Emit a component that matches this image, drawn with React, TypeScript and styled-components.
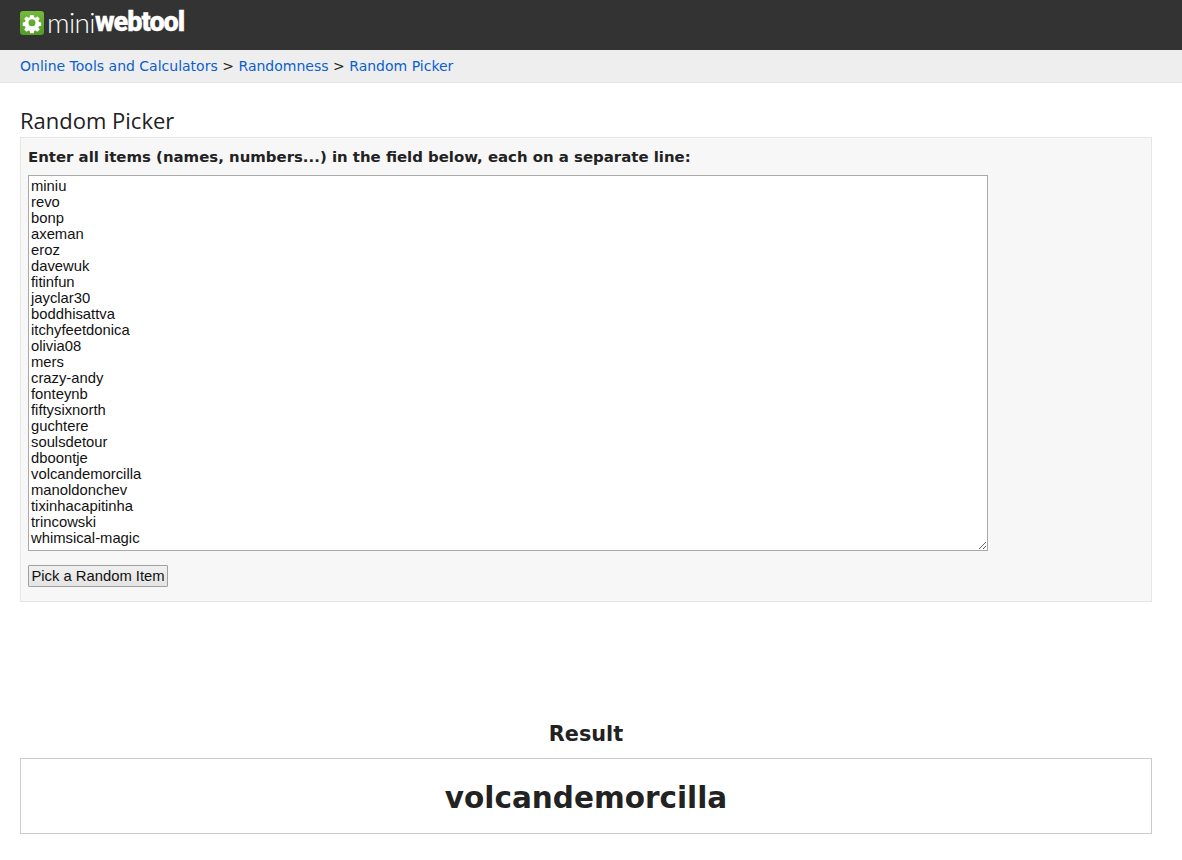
import styled, { createGlobalStyle } from "styled-components"

const GlobalStyle = createGlobalStyle`
  html, body {
    margin: 0;
    padding: 0;
    background: #fff;
    font-family: "DejaVu Sans", Verdana, sans-serif;
    color: #222;
  }
`

const Header = styled.div`
  height: 50px;
  background: #333;
  display: flex;
  align-items: center;
  padding: 0 20px 5px;
  box-sizing: border-box;
`

const Logo = styled.div`
  display: flex;
  align-items: center;
  color: #fff;
  height: 26px;
`

const LogoIcon = styled.svg`
  width: 24px;
  height: 24px;
  margin-right: 3px;
`

const LogoThin = styled.span`
  font-family: "Lato", sans-serif;
  font-weight: 300;
  font-size: 28px;
  letter-spacing: -0.6px;
  line-height: 26px;
  margin-bottom: 2px;
`

const LogoBold = styled.span`
  font-family: "Roboto", sans-serif;
  font-weight: 900;
  font-size: 27px;
  letter-spacing: -1px;
  line-height: 26px;
  margin-bottom: 2px;
  -webkit-text-stroke: 0.3px #fff;
`

const Breadcrumb = styled.div`
  height: 33px;
  box-sizing: border-box;
  background: #eee;
  border-bottom: 1px solid #e4e4e4;
  padding: 0 20px;
  display: flex;
  align-items: center;
  gap: 4.5px;
  font-size: 14px;
  color: #222;
`

const Crumb = styled.a`
  color: #0b5fce;
  text-decoration: none;
`

const Main = styled.div`
  padding: 0 30px 0 20px;
`

const Title = styled.h1`
  margin: 23px 0 3px;
  font-size: 22px;
  line-height: 28px;
  font-weight: 400;
  font-family: "Open Sans", sans-serif;
  color: #222;
`

const Panel = styled.div`
  height: 465px;
  box-sizing: border-box;
  background: #f7f7f7;
  border: 1px solid #e6e6e6;
  padding: 10px 7px 0;
`

const Label = styled.div`
  font-size: 14.93px;
  font-weight: 700;
  line-height: 18px;
  color: #222;
  margin-bottom: 9px;
`

const ItemsField = styled.textarea`
  display: block;
  width: 960px;
  height: 376px;
  box-sizing: border-box;
  margin: 0;
  padding: 2px;
  border: 1px solid #a9a9a9;
  background: #fff;
  font-family: "Liberation Sans", Arial, sans-serif;
  font-size: 14.8px;
  line-height: 16px;
  color: #111;
  overflow: hidden;
  outline: none;
`

const PickButton = styled.button`
  display: block;
  margin-top: 14px;
  height: 22px;
  width: 140px;
  padding: 0;
  box-sizing: border-box;
  border: 1px solid #a0a0a0;
  border-radius: 1px;
  background: linear-gradient(#f0f0f0, #e4e4e4);
  font-family: "Liberation Sans", Arial, sans-serif;
  font-size: 14.8px;
  color: #111;
`

const ResultTitle = styled.div`
  margin-top: 119px;
  text-align: center;
  font-size: 20.8px;
  font-weight: 700;
  line-height: 26px;
  color: #222;
`

const ResultBox = styled.div`
  margin-top: 11px;
  height: 76px;
  box-sizing: border-box;
  border: 1px solid #ccc;
  padding-top: 3px;
  display: flex;
  align-items: center;
  justify-content: center;
  font-size: 29.5px;
  font-weight: 700;
  color: #222;
`

const items = [
  "miniu", "revo", "bonp", "axeman", "eroz", "davewuk", "fitinfun", "jayclar30",
  "boddhisattva", "itchyfeetdonica", "olivia08", "mers", "crazy-andy", "fonteynb",
  "fiftysixnorth", "guchtere", "soulsdetour", "dboontje", "volcandemorcilla",
  "manoldonchev", "tixinhacapitinha", "trincowski", "whimsical-magic",
].join("\n")

const App = () => {
  return (
    <>
      <GlobalStyle />
      <Header>
        <Logo>
          <LogoIcon viewBox="0 0 24 24">
            <defs>
              <linearGradient id="logoGreen" x1="0" y1="0" x2="0" y2="1">
                <stop offset="0" stopColor="#72bb3c" />
                <stop offset="1" stopColor="#529c28" />
              </linearGradient>
            </defs>
            <rect width="24" height="24" rx="3" fill="url(#logoGreen)" />
            <path
              fill="#fff"
              fillRule="evenodd"
              d="M10 3.5h4l.5 2.6 1.5.7 2.2-1.5 2.6 2.7-1.5 2.2.6 1.5 2.6.5v3.6l-2.6.5-.6 1.5 1.5 2.2-2.6 2.7-2.2-1.5-1.5.6-.5 2.6h-4l-.5-2.6-1.5-.6-2.2 1.5-2.6-2.7 1.5-2.2-.6-1.5-2.6-.5v-3.6l2.6-.5.6-1.5-1.5-2.2 2.6-2.7 2.2 1.5 1.5-.7zM12 8.5a4 4 0 1 0 0 8 4 4 0 0 0 0-8z"
              transform="translate(1.4 .8) scale(.88)"
            />
          </LogoIcon>
          <LogoThin>mini</LogoThin>
          <LogoBold>webtool</LogoBold>
        </Logo>
      </Header>

      <Breadcrumb>
        <Crumb href="#">Online Tools and Calculators</Crumb>
        <span>&gt;</span>
        <Crumb href="#">Randomness</Crumb>
        <span>&gt;</span>
        <Crumb href="#">Random Picker</Crumb>
      </Breadcrumb>

      <Main>
        <Title>Random Picker</Title>
        <Panel>
          <Label>Enter all items (names, numbers...) in the field below, each on a separate line:</Label>
          <ItemsField defaultValue={items} spellCheck={false} />
          <PickButton>Pick a Random Item</PickButton>
        </Panel>
        <ResultTitle>Result</ResultTitle>
        <ResultBox>volcandemorcilla</ResultBox>
      </Main>
    </>
  )
}

export default App
